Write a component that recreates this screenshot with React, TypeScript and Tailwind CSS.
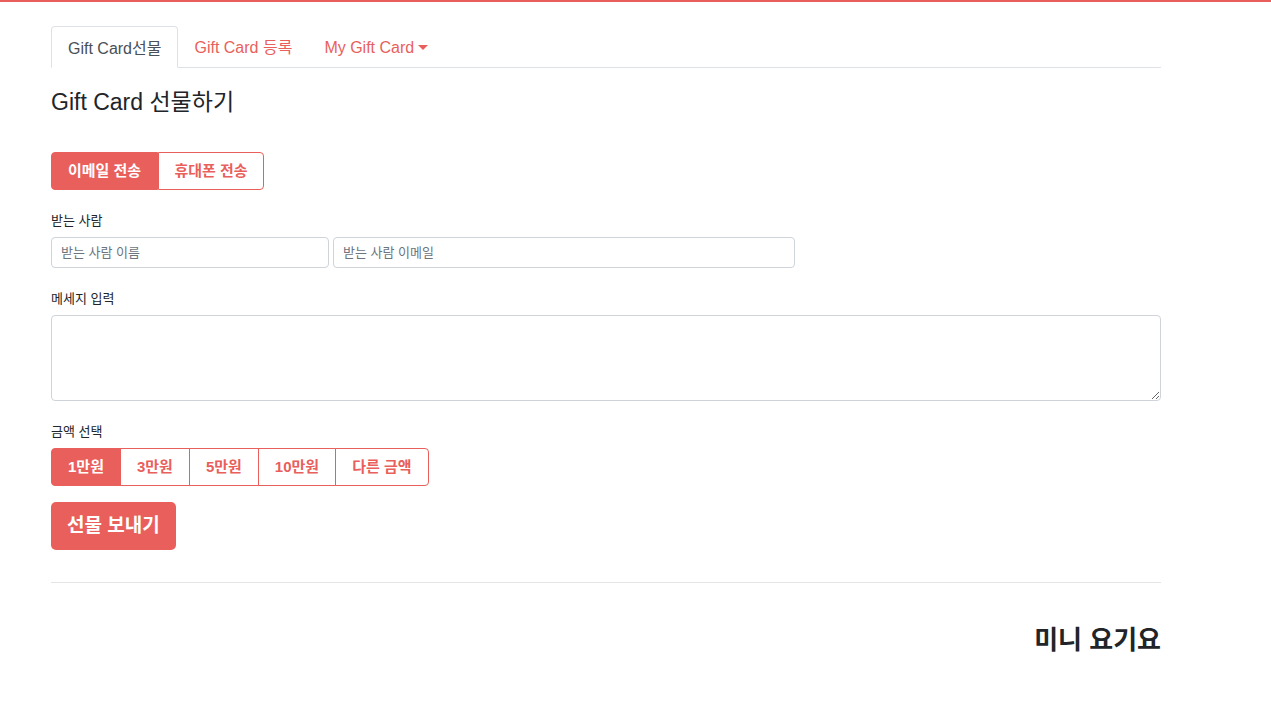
import { useState } from "react";

const amounts = ["1만원", "3만원", "5만원", "10만원", "다른 금액"];

const App = () => {
  const [sendType, setSendType] = useState<"email" | "phone">("email");
  const [amount, setAmount] = useState("1만원");

  return (
    <div
      className="min-h-[714px] border-t-2 border-[#e95f5c] bg-white text-[#212529]"
      style={{ fontFamily: '"Liberation Sans", "Noto Sans CJK KR", sans-serif' }}
    >
      <div className="w-[1110px] pt-[24px] ml-[51px]">
        <ul className="flex border-b border-[#dee2e6] text-[16px]">
          <li className="-mb-px">
            <a className="block h-[42px] rounded-t border border-[#dee2e6] border-b-white bg-white px-[16px] pt-[10px] text-[#495057]">
              Gift Card선물
            </a>
          </li>
          <li>
            <a className="block h-[41px] px-[16px] pt-[10px] text-[#e95f5c]">Gift Card 등록</a>
          </li>
          <li>
            <a className="flex h-[41px] items-start gap-[4px] px-[16px] pt-[10px] text-[#e95f5c]">
              My Gift Card
              <span className="mt-[9px] border-x-[5px] border-t-[5px] border-x-transparent border-t-[#e95f5c]" />
            </a>
          </li>
        </ul>

        <h4 className="mt-[20px] text-[23px] leading-[28px]">Gift Card 선물하기</h4>

        <div className="mt-[36px] flex">
          <button
            onClick={() => setSendType("email")}
            className={`h-[38px] w-[107px] rounded-l border border-[#e95f5c] text-[15px] font-bold ${
              sendType === "email" ? "bg-[#e95f5c] text-white" : "bg-white text-[#e95f5c]"
            }`}
          >
            이메일 전송
          </button>
          <button
            onClick={() => setSendType("phone")}
            className={`h-[38px] w-[106px] rounded-r border border-[#e95f5c] text-[15px] font-bold ${
              sendType === "phone" ? "bg-[#e95f5c] text-white" : "bg-white text-[#e95f5c]"
            }`}
          >
            휴대폰 전송
          </button>
        </div>

        <label className="mt-[23px] block text-[13px] leading-[16px]">받는 사람</label>
        <div className="mt-[8px] flex gap-[4px]">
          <input
            className="h-[31px] w-[278px] rounded border border-[#ced4da] px-[9px] text-[13px] placeholder:text-[#6c757d] outline-none"
            placeholder="받는 사람 이름"
          />
          <input
            className="h-[31px] w-[462px] rounded border border-[#ced4da] px-[9px] text-[13px] placeholder:text-[#6c757d] outline-none"
            placeholder="받는 사람 이메일"
          />
        </div>

        <label className="mt-[23px] block text-[13px] leading-[16px]">메세지 입력</label>
        <textarea className="mt-[8px] block h-[86px] w-full rounded border border-[#ced4da] px-[9px] py-[6px] text-[13px] outline-none" />

        <label className="mt-[23px] block text-[13px] leading-[16px]">금액 선택</label>
        <div className="mt-[8px] flex">
          {amounts.map((a, i) => (
            <button
              key={a}
              onClick={() => setAmount(a)}
              className={`h-[38px] border border-[#e95f5c] px-[16px] text-[15px] font-bold ${
                i > 0 ? "-ml-px" : ""
              } ${i === 0 ? "rounded-l" : ""} ${i === amounts.length - 1 ? "rounded-r" : ""} ${
                amount === a ? "bg-[#e95f5c] text-white" : "bg-white text-[#e95f5c]"
              }`}
            >
              {a}
            </button>
          ))}
        </div>

        <button className="mt-[16px] h-[48px] rounded-[5px] bg-[#e95f5c] px-[16px] text-[19px] font-bold text-white">
          선물 보내기
        </button>

        <hr className="mt-[32px] border-t border-[#e5e5e5]" />

        <h3 className="mt-[41px] text-right text-[26px] font-bold leading-[32px]">미니 요기요</h3>
      </div>
    </div>
  );
};

export default App;
